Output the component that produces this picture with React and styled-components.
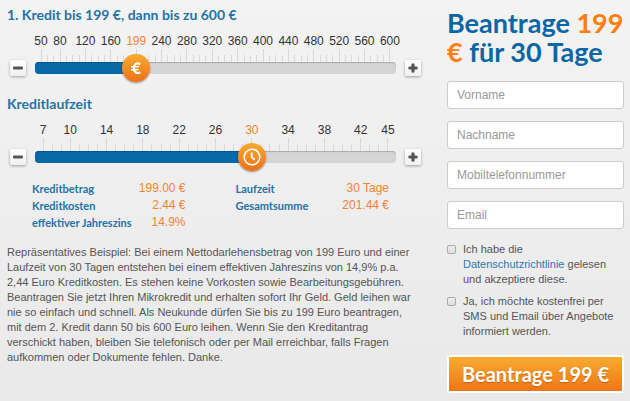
import React, { useState } from "react";
import styled, { createGlobalStyle } from "styled-components";

const AMOUNT_MARKS = {
  50: 50, 80: 80, 120: 120, 160: 160, 200: 199, 240: 240, 280: 280, 320: 320,
  360: 360, 400: 400, 440: 440, 480: 480, 520: 520, 560: 560, 600: 600,
};
const DAY_MARKS = {
  7: 7, 10: 10, 14: 14, 18: 18, 22: 22, 26: 26, 30: 30, 34: 34, 38: 38, 42: 42, 45: 45,
};
const YEARLY_RATE = 0.149;

const EuroIcon = () => (
  <svg width="28" height="28" viewBox="0 0 28 28" fill="none" stroke="#fff">
    <path d="M18.2 10.3C15 8.2 11.8 10 11.8 14.2s3.2 6 6.4 4" strokeWidth="2.2" />
    <path d="M9 12.8h8M9 15.7h7.4" strokeWidth="1.6" />
  </svg>
);

const ClockIcon = () => (
  <svg width="28" height="28" viewBox="0 0 28 28" fill="none" stroke="#fff">
    <circle cx="14" cy="14" r="7.8" strokeWidth="1.6" />
    <path d="M13.7 9.4v4.8l3 2.6" strokeWidth="1.8" />
  </svg>
);

const Slider = ({ label, min, max, step, marks, inset, value, onChange, icon }) => {
  const ticks = [];
  for (let i = min; i <= max; i += step) ticks.push(i);
  const ratio = (value - min) / (max - min);
  const move = (next) => onChange(Math.min(max, Math.max(min, next)));

  return (
    <SliderRow>
      <StepButton type="button" aria-label="weniger" onClick={() => move(value - step)}>
        <svg width="10" height="10" viewBox="0 0 10 10">
          <rect y="3.5" width="10" height="3" rx="1" fill="#555" />
        </svg>
      </StepButton>
      <SliderBody>
        <Scale $inset={inset}>
          {ticks.map((tick) => (
            <Tick key={tick} $major={tick in marks}>
              {tick in marks && (
                <TickLabel $active={marks[tick] === value}>{marks[tick]}</TickLabel>
              )}
            </Tick>
          ))}
        </Scale>
        <Track>
          <Fill style={{ width: `${ratio * 100}%` }} />
          <Knob
            style={{ left: `calc(${inset}px + (100% - ${inset * 2}px) * ${ratio})` }}
          >
            {icon}
          </Knob>
          <Range
            type="range"
            aria-label={label}
            $inset={inset}
            min={min}
            max={max}
            value={value}
            onChange={(e) => onChange(Number(e.target.value))}
          />
        </Track>
      </SliderBody>
      <StepButton type="button" aria-label="mehr" onClick={() => move(value + step)}>
        <svg width="10" height="10" viewBox="0 0 10 10">
          <path
            d="M5 1.8v6.4M1.8 5h6.4"
            stroke="#555"
            strokeWidth="3.2"
            strokeLinecap="round"
          />
        </svg>
      </StepButton>
    </SliderRow>
  );
};

const App = () => {
  const [amount, setAmount] = useState(199);
  const [days, setDays] = useState(30);
  const [form, setForm] = useState({ firstname: "", lastname: "", phone: "", email: "" });
  const cost = (amount * YEARLY_RATE * days) / 365;

  const onInputChange = (e) => {
    setForm({ ...form, [e.target.name]: e.target.value });
  };

  return (
    <>
      <GlobalStyle />
      <Page>
        <Calculator>
          <SubTitle>1. Kredit bis 199 €, dann bis zu 600 €</SubTitle>
          <Slider
            label="Kreditbetrag"
            min={50}
            max={600}
            step={10}
            marks={AMOUNT_MARKS}
            inset={6}
            value={amount}
            onChange={setAmount}
            icon={<EuroIcon />}
          />
          <SubTitle>Kreditlaufzeit</SubTitle>
          <Slider
            label="Kreditlaufzeit"
            min={7}
            max={45}
            step={1}
            marks={DAY_MARKS}
            inset={8}
            value={days}
            onChange={setDays}
            icon={<ClockIcon />}
          />
          <Summary>
            <SummaryList>
              <dt>Kreditbetrag</dt>
              <dd>{amount.toFixed(2)} €</dd>
              <dt>Kreditkosten</dt>
              <dd>{cost.toFixed(2)} €</dd>
              <dt>effektiver Jahreszins</dt>
              <dd>14.9%</dd>
            </SummaryList>
            <SummaryList>
              <dt>Laufzeit</dt>
              <dd>{days} Tage</dd>
              <dt>Gesamtsumme</dt>
              <dd>{(amount + cost).toFixed(2)} €</dd>
            </SummaryList>
          </Summary>
          <Example>
            Repräsentatives Beispiel: Bei einem Nettodarlehensbetrag von 199 Euro und einer
            Laufzeit von 30 Tagen entstehen bei einem effektiven Jahreszins von 14,9% p.a.
            2,44 Euro Kreditkosten. Es stehen keine Vorkosten sowie Bearbeitungsgebühren.
            Beantragen Sie jetzt Ihren Mikrokredit und erhalten sofort Ihr Geld. Geld leihen
            war nie so einfach und schnell. Als Neukunde dürfen Sie bis zu 199 Euro
            beantragen, mit dem 2. Kredit dann 50 bis 600 Euro leihen. Wenn Sie den
            Kreditantrag verschickt haben, bleiben Sie telefonisch oder per Mail erreichbar,
            falls Fragen aufkommen oder Dokumente fehlen. Danke.
          </Example>
        </Calculator>
        <Form onSubmit={(e) => e.preventDefault()}>
          <Title>
            Beantrage <span>{amount} €</span> für {days} Tage
          </Title>
          <Input
            name="firstname"
            placeholder="Vorname"
            aria-label="Vorname"
            value={form.firstname}
            onChange={onInputChange}
          />
          <Input
            name="lastname"
            placeholder="Nachname"
            aria-label="Nachname"
            value={form.lastname}
            onChange={onInputChange}
          />
          <Input
            type="tel"
            name="phone"
            placeholder="Mobiltelefonnummer"
            aria-label="Mobiltelefonnummer"
            value={form.phone}
            onChange={onInputChange}
          />
          <Input
            type="email"
            name="email"
            placeholder="Email"
            aria-label="Email"
            value={form.email}
            onChange={onInputChange}
          />
          <Consent>
            <Checkbox type="checkbox" id="privacy" />
            <label htmlFor="privacy">
              Ich habe die <a href="#datenschutz">Datenschutzrichtlinie</a> gelesen und
              akzeptiere diese.
            </label>
          </Consent>
          <Consent>
            <Checkbox type="checkbox" id="news" />
            <label htmlFor="news">
              Ja, ich möchte kostenfrei per SMS und Email über Angebote informiert werden.
            </label>
          </Consent>
          <Submit type="submit">Beantrage {amount} €</Submit>
        </Form>
      </Page>
    </>
  );
};

export default App;

const GlobalStyle = createGlobalStyle`
  * {
    box-sizing: border-box;
  }
  body {
    margin: 0;
    font: 12px/15px "Liberation Sans", Arial, sans-serif;
    color: #555;
  }
`;

const Page = styled.main`
  display: grid;
  grid-template-columns: minmax(0, 1fr) 177px;
  gap: 26px;
  min-height: 100vh;
  padding: 6px 6px 6px 7px;
  background: linear-gradient(#f3f3f3, #e9e9e9);
`;

const Calculator = styled.section`
  display: flex;
  flex-direction: column;
`;

const SubTitle = styled.h2`
  margin: 0;
  font: bold 14px/18px Lato, sans-serif;
  color: #2473a6;
`;

const SliderRow = styled.div`
  display: flex;
  align-items: flex-end;
  gap: 9px;
  padding: 10px 0 19px 3px;
`;

const StepButton = styled.button`
  display: flex;
  align-items: center;
  justify-content: center;
  width: 16px;
  height: 16px;
  padding: 0;
  border: 0;
  border-radius: 2px;
  background: linear-gradient(#fff, #f0f0f0);
  box-shadow: 0 1px 3px rgba(0, 0, 0, 0.35);
`;

const SliderBody = styled.div`
  flex: 1;
  padding-bottom: 2px;
`;

const Scale = styled.div`
  display: flex;
  align-items: flex-end;
  justify-content: space-between;
  height: 28px;
  padding: 0 ${({ $inset }) => $inset}px;
`;

const Tick = styled.div`
  display: flex;
  flex-direction: column;
  align-items: center;
  width: 0;

  &::after {
    content: "";
    width: 1px;
    height: ${({ $major }) => ($major ? 13 : 7)}px;
    background: #d8d8d8;
  }
`;

const TickLabel = styled.span`
  color: ${({ $active }) => ($active ? "#f58233" : "#333")};
`;

const Track = styled.div`
  position: relative;
  height: 12px;
  border-radius: 4px;
  background: #d5d5d5;
  box-shadow: inset 0 1px 1px #aaa;
`;

const Fill = styled.div`
  height: 12px;
  border-radius: 4px 0 0 4px;
  background: #0569a8;
  box-shadow: inset 0 1px 1px #03558a;
`;

const Knob = styled.div`
  position: absolute;
  top: 50%;
  width: 28px;
  height: 28px;
  border-radius: 50%;
  transform: translate(-50%, -50%);
  background: linear-gradient(#f9ab2e, #ee7019);
  box-shadow: 0 1px 2px rgba(0, 0, 0, 0.4);

  svg {
    display: block;
  }
`;

const Range = styled.input`
  position: absolute;
  inset: 0;
  width: 100%;
  margin: 0;
  appearance: none;
  opacity: 0;
  cursor: pointer;

  &::-webkit-slider-thumb {
    appearance: none;
    width: ${({ $inset }) => $inset * 2}px;
    height: 12px;
  }
`;

const Summary = styled.div`
  display: grid;
  grid-template-columns: repeat(2, minmax(0, 1fr));
  align-items: start;
  gap: 50px;
  margin-top: -4px;
  padding: 0 32px 0 25px;
`;

const SummaryList = styled.dl`
  display: grid;
  grid-template-columns: auto auto;
  justify-content: space-between;
  margin: 0;
  line-height: 17px;
  white-space: nowrap;

  dt {
    font-family: Lato, sans-serif;
    font-size: 11px;
    font-weight: bold;
    color: #2473a6;
  }

  dd {
    margin: 0;
    text-align: right;
    color: #f58233;
  }
`;

const Example = styled.p`
  max-width: 410px;
  margin: 14px 0 0;
  font-size: 11px;
`;

const Form = styled.form`
  display: flex;
  flex-direction: column;
`;

const Title = styled.h1`
  margin: 2px 0 9px;
  font: bold 27px/29px Lato, sans-serif;
  color: #0b66a3;

  span {
    color: #ff7e10;
  }
`;

const Input = styled.input`
  height: 28px;
  margin: 6px 0;
  padding: 0 9px;
  border: 1px solid #ccc;
  border-radius: 3px;
  background: #fff;
  font: inherit;
  color: #555;

  &::placeholder {
    color: #999;
  }
`;

const Consent = styled.div`
  display: flex;
  align-items: flex-start;
  gap: 7px;
  margin-top: 7px;
  font-size: 11px;

  a {
    color: #2f78b0;
    text-decoration: none;
  }
`;

const Checkbox = styled.input`
  flex: none;
  appearance: none;
  width: 9px;
  height: 9px;
  margin: 3px 0 0;
  border: 1px solid #aaa;
  border-radius: 2px;
  background: linear-gradient(#eee, #ddd);

  &:checked {
    background: #0569a8;
  }
`;

const Submit = styled.button`
  height: 38px;
  margin-top: 16px;
  padding: 0;
  border: 2px solid #fff;
  border-radius: 3px;
  background: linear-gradient(#f8ac2f, #ee7518);
  font: bold 20px/24px Lato, sans-serif;
  color: #fff;
  text-shadow: 0 1px 1px rgba(150, 70, 0, 0.5);
`;
